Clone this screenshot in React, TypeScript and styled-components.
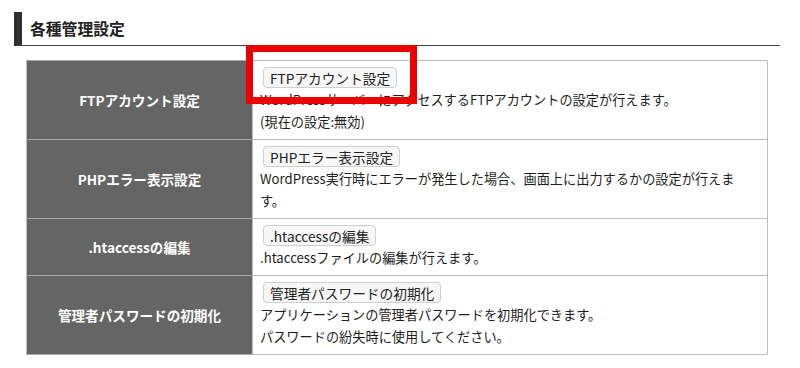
import React from "react";
import styled, { createGlobalStyle } from "styled-components";

const Global = createGlobalStyle`
  html, body { margin: 0; padding: 0; background: #fff; }
  body { font-family: "Noto Sans CJK JP", "Noto Sans", sans-serif; color: #222; }
`;

const Page = styled.div`
  position: relative;
  width: 800px;
  height: 368px;
  box-sizing: border-box;
  padding: 12px 20px 0 14px;
`;

const Heading = styled.h2`
  margin: 0;
  height: 34px;
  box-sizing: border-box;
  border-left: 8px solid #2f2f2f;
  border-bottom: 1px solid #444;
  padding-left: 8px;
  display: flex;
  align-items: center;
  font-size: 15.8px;
  font-weight: 700;
  color: #222;
`;

const Table = styled.table`
  margin: 14px 12px 0 12px;
  width: calc(100% - 24px);
  border-collapse: collapse;
  border: 1px solid #bdbdbd;
`;

const Row = styled.tr<{ $h: number }>`
  height: ${(p) => p.$h}px;
`;

const Th = styled.th`
  width: 225px;
  background: #656565;
  color: #fff;
  font-size: 13.6px;
  font-weight: 700;
  text-align: center;
  vertical-align: middle;
  border-top: 1px solid #a8a8a8;
  border-bottom: 1px solid #a8a8a8;
  padding: 0;
`;

const Td = styled.td`
  background: #fff;
  font-size: 13.2px;
  line-height: 22px;
  color: #1e1e1e;
  vertical-align: top;
  border: 1px solid #bdbdbd;
  padding: 6px 10px 5px 7px;
`;

const Button = styled.button`
  display: inline-flex;
  align-items: center;
  height: 21px;
  margin: 0 0 1px 3px;
  padding: 0 6px;
  box-sizing: border-box;
  font-family: "Noto Sans CJK JP", "Noto Sans", sans-serif;
  font-size: 13.7px;
  color: #222;
  background: #f7f7f7;
  border: 1px solid #cfcfcf;
  border-radius: 4px;
  vertical-align: top;
  cursor: pointer;
`;

const Line = styled.div``;

const Highlight = styled.div`
  position: absolute;
  left: 246px;
  top: 45px;
  width: 171px;
  height: 59px;
  box-sizing: border-box;
  border: 7px solid #ea0000;
  pointer-events: none;
`;

const rows = [
  {
    title: "FTPアカウント設定",
    button: "FTPアカウント設定",
    lines: ["WordPressサーバーにアクセスするFTPアカウントの設定が行えます。", "(現在の設定:無効)"],
    h: 79,
  },
  {
    title: "PHPエラー表示設定",
    button: "PHPエラー表示設定",
    lines: ["WordPress実行時にエラーが発生した場合、画面上に出力するかの設定が行えま", "す。"],
    h: 79,
  },
  {
    title: ".htaccessの編集",
    button: ".htaccessの編集",
    lines: [".htaccessファイルの編集が行えます。"],
    h: 57,
  },
  {
    title: "管理者パスワードの初期化",
    button: "管理者パスワードの初期化",
    lines: ["アプリケーションの管理者パスワードを初期化できます。", "パスワードの紛失時に使用してください。"],
    h: 79,
  },
];

export default function App() {
  return (
    <>
      <Global />
      <Page>
        <Heading>各種管理設定</Heading>
        <Table>
          <tbody>
            {rows.map((r) => (
              <Row key={r.title} $h={r.h}>
                <Th>{r.title}</Th>
                <Td>
                  <Button>{r.button}</Button>
                  {r.lines.map((l) => (
                    <Line key={l}>{l}</Line>
                  ))}
                </Td>
              </Row>
            ))}
          </tbody>
        </Table>
        <Highlight />
      </Page>
    </>
  );
}
